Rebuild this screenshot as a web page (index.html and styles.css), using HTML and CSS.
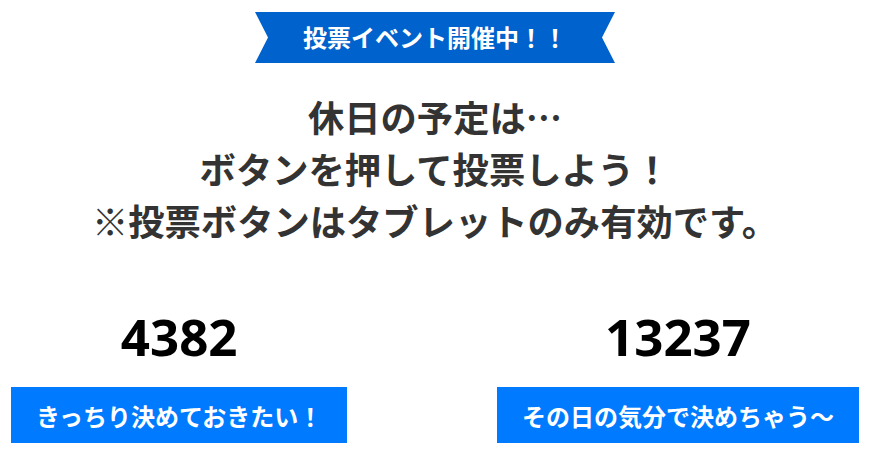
FILE: index.html
```html
<!DOCTYPE html>
<html lang="ja">
<head>
    <meta charset="UTF-8">
    <title>投票イベント</title>
    <link rel="stylesheet" href="styles.css">
</head>
<body>
    <div class="banner">
        <div class="ribbon">投票イベント開催中！！</div>
    </div>

    <div class="lead">
        <p>休日の予定は…</p>
        <p>ボタンを押して投票しよう！</p>
        <p>※投票ボタンはタブレットのみ有効です。</p>
    </div>

    <div class="votes">
        <div class="vote">
            <div class="count" id="countA">4382</div>
            <button class="vote-btn" onclick="vote('countA')">きっちり決めておきたい！</button>
        </div>
        <div class="vote">
            <div class="count" id="countB">13237</div>
            <button class="vote-btn" onclick="vote('countB')">その日の気分で決めちゃう～</button>
        </div>
    </div>

    <script>
        // タブレットのみ投票を受け付ける
        function vote(id) {
            if (!('ontouchstart' in window)) return;
            const el = document.getElementById(id);
            el.textContent = parseInt(el.textContent, 10) + 1;
        }
    </script>
</body>
</html>
```

FILE: styles.css
```css
body {
    margin: 0;
    padding: 0 6px 0 0;
    background-color: white;
    font-family: "Noto Sans CJK JP", "Noto Sans", sans-serif;
}

.banner {
    display: flex;
    justify-content: center;
    padding-top: 12px;
}

/* 両端を切り欠いたリボン */
.ribbon {
    width: 360px;
    height: 51px;
    line-height: 49px;
    text-align: center;
    color: white;
    font-size: 24px;
    font-weight: bold;
    background-color: #0062cc;
    clip-path: polygon(0 0, 100% 0, calc(100% - 13px) 50%, 100% 100%, 0 100%, 13px 50%);
}

.lead {
    margin-top: 27px;
    text-align: center;
    color: #333;
    font-size: 36.3px;
    font-weight: bold;
    line-height: 52px;
}

.lead p {
    margin: 0;
}

.votes {
    display: flex;
    justify-content: space-between;
    margin-top: 61px;
    padding: 0 11px;
}

.vote {
    display: flex;
    flex-direction: column;
    align-items: center;
}

.count {
    font-family: "Noto Sans", sans-serif;
    font-size: 51px;
    font-weight: bold;
    line-height: 58px;
    color: black;
}

.vote-btn {
    margin-top: 22px;
    height: 56px;
    padding: 0 25px;
    border: none;
    background-color: #007bff;
    color: white;
    font-family: "Noto Sans CJK JP", sans-serif;
    font-size: 24px;
    font-weight: bold;
    cursor: pointer;
}

.vote-btn:hover {
    background-color: #0069d9;
}
```
